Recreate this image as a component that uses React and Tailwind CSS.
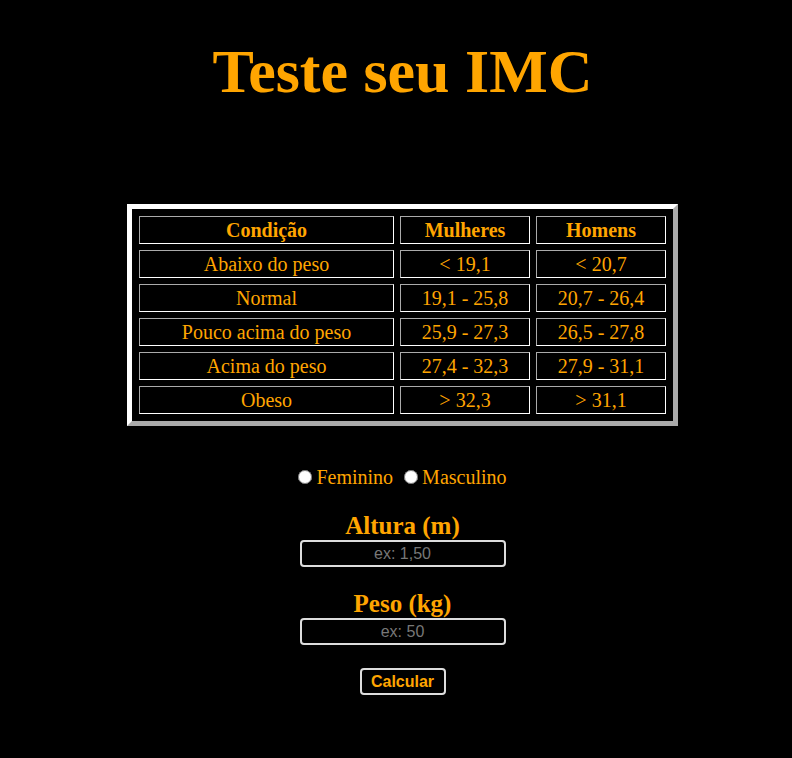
const rows = [
  ["Abaixo do peso", "< 19,1", "< 20,7"],
  ["Normal", "19,1 - 25,8", "20,7 - 26,4"],
  ["Pouco acima do peso", "25,9 - 27,3", "26,5 - 27,8"],
  ["Acima do peso", "27,4 - 32,3", "27,9 - 31,1"],
  ["Obeso", "> 32,3", "> 31,1"],
];

function Cell({ children, bold }) {
  return (
    <div
      className={
        "flex h-[28px] items-center justify-center border border-t-[#aaa] border-l-[#aaa] border-r-white border-b-white text-[20px] leading-[22px] " +
        (bold ? "font-bold" : "")
      }
    >
      {children}
    </div>
  );
}

export default function App() {
  return (
    <div className="min-h-[758px] bg-black pl-[13px] text-[#ffa500] font-['Liberation_Serif',serif]">
      <h1 className="pt-[36px] text-center text-[62px] font-bold leading-[71px]">Teste seu IMC</h1>

      <div className="mt-[97px] flex justify-center">
        <div className="grid grid-cols-[255px_130px_130px] gap-[6px] border-[5px] border-t-white border-l-white border-r-[#aaa] border-b-[#aaa] p-[7px]">
          <Cell bold>Condição</Cell>
          <Cell bold>Mulheres</Cell>
          <Cell bold>Homens</Cell>
          {rows.map((r) => [
            <Cell key={r[0] + "a"}>{r[0]}</Cell>,
            <Cell key={r[0] + "b"}>{r[1]}</Cell>,
            <Cell key={r[0] + "c"}>{r[2]}</Cell>,
          ])}
        </div>
      </div>

      <div className="mt-[40px] flex h-[22px] items-center justify-center text-[20px] leading-[22px]">
        <label className="flex items-center">
          <input type="radio" name="sexo" className="mr-[4px] h-[14px] w-[14px] accent-white" />
          <span>Feminino</span>
        </label>
        <label className="ml-[11px] flex items-center">
          <input type="radio" name="sexo" className="mr-[4px] h-[14px] w-[14px] accent-white" />
          <span>Masculino</span>
        </label>
      </div>

      <div className="mt-[24px] flex flex-col items-center">
        <div className="text-[25px] font-bold leading-[28px]">Altura (m)</div>
        <input
          type="text"
          placeholder="ex: 1,50"
          className="h-[27px] w-[206px] rounded-[4px] border-2 border-[#ddd] bg-black text-center text-[16px] text-white placeholder-[#777] font-['Liberation_Sans',sans-serif] outline-none"
        />
      </div>

      <div className="mt-[23px] flex flex-col items-center">
        <div className="text-[25px] font-bold leading-[28px]">Peso (kg)</div>
        <input
          type="text"
          placeholder="ex: 50"
          className="h-[27px] w-[206px] rounded-[4px] border-2 border-[#ddd] bg-black text-center text-[16px] text-white placeholder-[#777] font-['Liberation_Sans',sans-serif] outline-none"
        />
      </div>

      <div className="mt-[23px] flex justify-center">
        <button
          type="button"
          className="h-[27px] w-[86px] rounded-[4px] border-2 border-[#ddd] bg-black text-[16px] font-bold text-[#ffa500] font-['Liberation_Sans',sans-serif]"
        >
          Calcular
        </button>
      </div>
    </div>
  );
}
